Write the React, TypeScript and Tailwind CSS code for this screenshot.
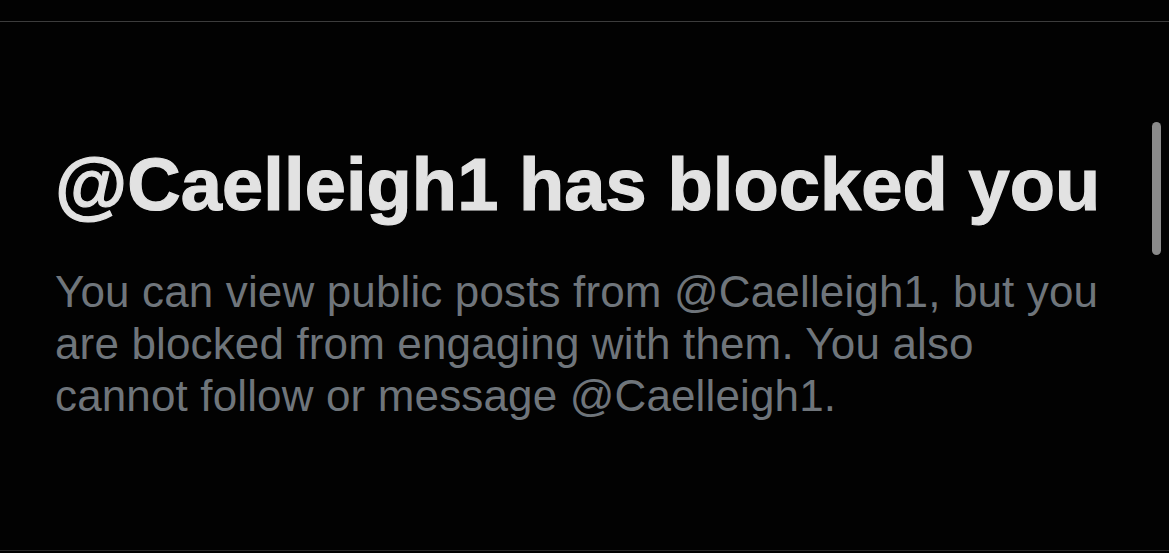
export default function App() {
  return (
    <div className="relative w-[1169px] h-[553px] overflow-hidden bg-[#020202]" style={{ fontFamily: '"Liberation Sans", Arial, sans-serif' }}>
      <div className="h-[21px]" />
      <div className="h-px bg-[#3c3c3c]" />
      <div className="pl-[55px] pt-[119px]">
        <h1 className="text-[74px] leading-[88px] font-bold text-[#e2e2e2] whitespace-nowrap tracking-[0.1px] [-webkit-text-stroke:1.2px_#e2e2e2]">
          @Caelleigh1 has blocked you
        </h1>
        <p className="mt-[37px] text-[44px] leading-[52px] text-[#6f757b] whitespace-nowrap tracking-[0.14px]">
          You can view public posts from @Caelleigh1, but you
          <br />
          are blocked from engaging with them. You also
          <br />
          cannot follow or message @Caelleigh1.
        </p>
      </div>
      <div className="absolute left-[1152px] top-[122px] w-[9px] h-[133px] rounded-full bg-[#8a8a8a]" />
      <div className="absolute left-0 right-0 top-[550px] h-px bg-[#2a2a2a]" />
    </div>
  );
}
